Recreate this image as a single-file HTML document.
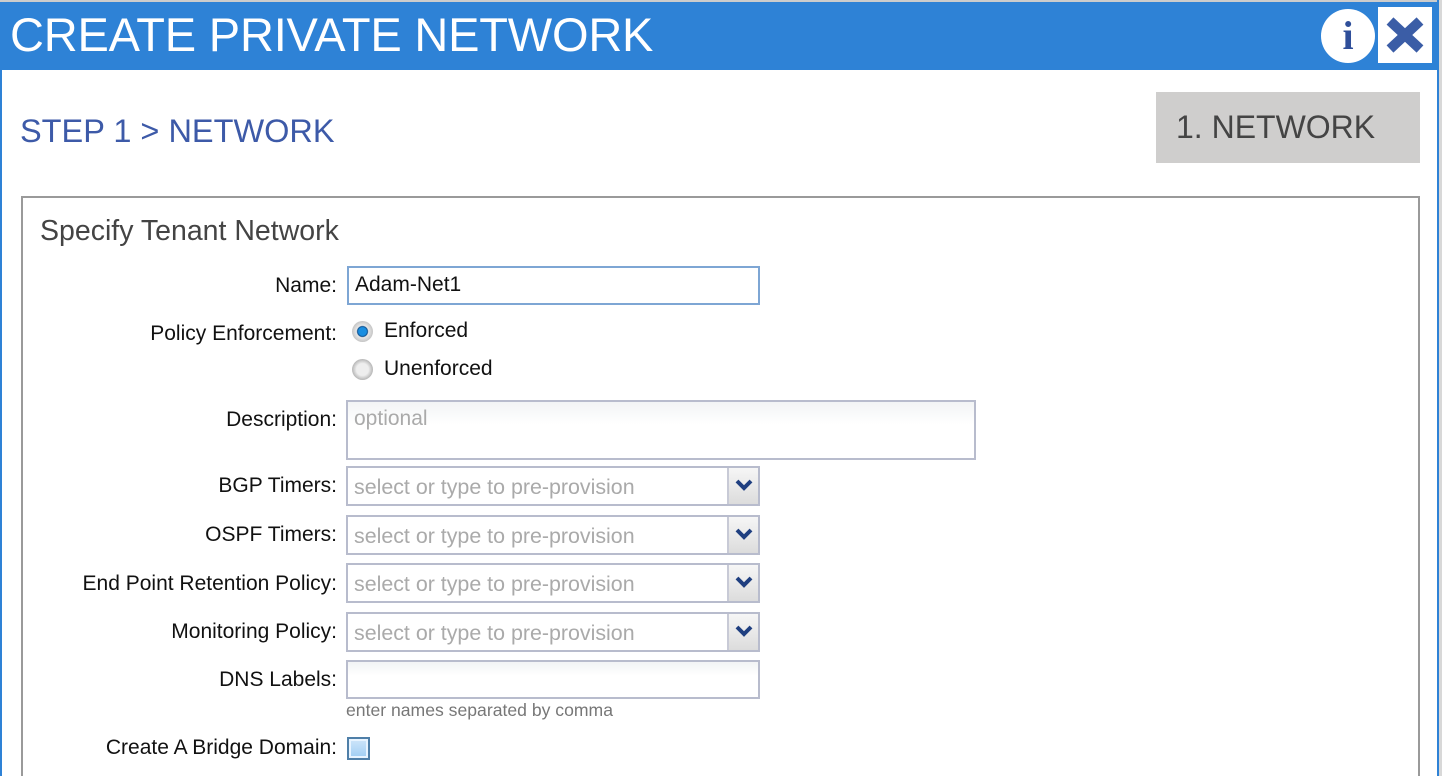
<!DOCTYPE html>
<html style="overflow:hidden;height:776px"><head><meta charset="utf-8"><style>
*{margin:0;padding:0;box-sizing:border-box}
body{width:1442px;height:776px;overflow:hidden;background:#fff;font-family:"Liberation Sans",sans-serif;position:relative}
.a{position:absolute}
.lbl{position:absolute;right:1105px;font-size:21px;color:#111;white-space:nowrap}
.inp{position:absolute;border:2px solid #b8bccd;background:linear-gradient(#f2f4f5,#fff 40%);font-size:21px;color:#aaa;padding:5px 0 0 6px}
.sel{position:absolute;left:346px;width:414px;height:40px;border:2px solid #b8bccd;background:#fff;font-size:21.4px;color:#aaa;padding:7px 0 0 6px;white-space:nowrap}
.sel .b{position:absolute;right:0;top:0;width:31px;height:36px;border-left:2px solid #c8cad6;background:linear-gradient(#f6f6f6,#dcdcdc)}
.sel .b svg{position:absolute;left:5px;top:11px}
</style></head><body>
<div class="a" style="left:0;top:0;width:1442px;height:2px;background:#ccc"></div>
<div class="a" style="left:0;top:2px;width:1437px;height:68px;background:#2e82d6"></div>
<div class="a" style="left:0;top:70px;width:2px;height:706px;background:#2e82d6"></div>
<div class="a" style="left:1437px;top:0;width:2px;height:776px;background:#2e82d6"></div>
<div class="a" style="left:1439px;top:0;width:3px;height:776px;background:#d8d8d8"></div>
<div class="a" style="left:10px;top:7px;font-size:47px;color:#fff;letter-spacing:-0.2px;white-space:nowrap">CREATE PRIVATE NETWORK</div>
<div class="a" style="left:1321px;top:9px;width:54px;height:54px;border-radius:50%;background:#fff;color:#2f4f9a;font:bold 40px 'Liberation Serif',serif;text-align:center;line-height:54px">i</div>
<div class="a" style="left:1378px;top:7px;width:54px;height:56px;background:#fff">
<svg width="54" height="56" viewBox="0 0 54 56"><path d="M12 14L42 42M42 14L12 42" stroke="#3b5da6" stroke-width="10"/></svg></div>
<div class="a" style="left:20px;top:113px;font-size:32.5px;color:#3d5aa8;white-space:nowrap">STEP 1 &gt; NETWORK</div>
<div class="a" style="left:1156px;top:92px;width:264px;height:71px;background:#cfcecd;font-size:32px;color:#444;padding:17px 0 0 20px;white-space:nowrap">1. NETWORK</div>
<div class="a" style="left:21px;top:196px;width:1399px;height:590px;border:2px solid #9a9a9a"></div>
<div class="a" style="left:40px;top:215px;font-size:28.5px;color:#444;white-space:nowrap">Specify Tenant Network</div>

<div class="lbl" style="top:274px">Name:</div>
<div class="inp" style="left:347px;top:266px;width:413px;height:39px;border-color:#7ea6d4;color:#111;background:#fff">Adam-Net1</div>

<div class="lbl" style="top:322px">Policy Enforcement:</div>
<div class="a" style="left:352px;top:321px;width:21px;height:21px;border-radius:50%;background:radial-gradient(circle,#1a8ee0 0 4px,#0b4b8a 5px,#e8e8e8 6px,#c8c8c8 10px)"></div>
<div class="a" style="left:384px;top:319px;font-size:21px;color:#111">Enforced</div>
<div class="a" style="left:352px;top:359px;width:21px;height:21px;border-radius:50%;background:radial-gradient(circle,#eee 0 6px,#bbb 10px)"></div>
<div class="a" style="left:384px;top:357px;font-size:21px;color:#111">Unenforced</div>

<div class="lbl" style="top:408px">Description:</div>
<div class="inp" style="left:346px;top:400px;width:630px;height:60px">optional</div>

<div class="lbl" style="top:474px">BGP Timers:</div>
<div class="sel" style="top:466px">select or type to pre-provision<div class="b"><svg width="20" height="12"><path d="M3 2L10 9L17 2" stroke="#1f3f80" stroke-width="4" fill="none"/></svg></div></div>
<div class="lbl" style="top:523px">OSPF Timers:</div>
<div class="sel" style="top:515px">select or type to pre-provision<div class="b"><svg width="20" height="12"><path d="M3 2L10 9L17 2" stroke="#1f3f80" stroke-width="4" fill="none"/></svg></div></div>
<div class="lbl" style="top:572px">End Point Retention Policy:</div>
<div class="sel" style="top:563px">select or type to pre-provision<div class="b"><svg width="20" height="12"><path d="M3 2L10 9L17 2" stroke="#1f3f80" stroke-width="4" fill="none"/></svg></div></div>
<div class="lbl" style="top:620px">Monitoring Policy:</div>
<div class="sel" style="top:612px">select or type to pre-provision<div class="b"><svg width="20" height="12"><path d="M3 2L10 9L17 2" stroke="#1f3f80" stroke-width="4" fill="none"/></svg></div></div>

<div class="lbl" style="top:668px">DNS Labels:</div>
<div class="inp" style="left:346px;top:660px;width:414px;height:39px"></div>
<div class="a" style="left:346px;top:700px;font-size:17.6px;color:#777;white-space:nowrap">enter names separated by comma</div>

<div class="lbl" style="top:736px">Create A Bridge Domain:</div>
<div class="a" style="left:347px;top:737px;width:23px;height:23px;border:2px solid #4f7fa8;background:linear-gradient(#cfe6fa,#9fcdf3);box-shadow:inset 0 0 0 2px #e8f4ff"></div>
</body></html>
